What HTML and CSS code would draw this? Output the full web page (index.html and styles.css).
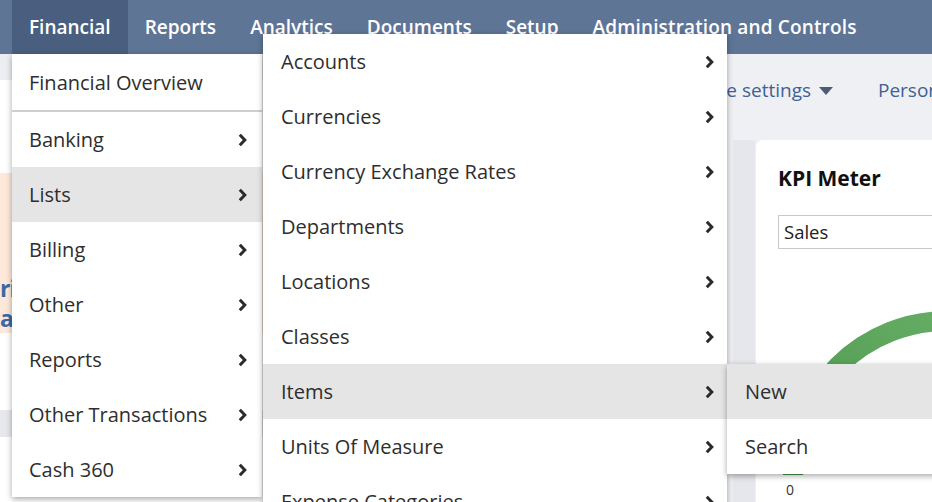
FILE: index.html
```html
<!DOCTYPE html>
<html lang="en">
<head>
<meta charset="utf-8">
<title>Financial menu</title>
<link rel="stylesheet" href="styles.css">
</head>
<body>
<div class="app">
  <nav class="topnav">
    <a class="tab active">Financial</a>
    <a class="tab">Reports</a>
    <a class="tab">Analytics</a>
    <a class="tab">Documents</a>
    <a class="tab">Setup</a>
    <a class="tab">Administration and Controls</a>
  </nav>

  <div class="page">
    <aside class="leftcol">
      <div class="lc-head"></div>
      <div class="lc-white"></div>
      <div class="lc-alert"><p>ri</p><p>a</p></div>
      <div class="lc-white2"></div>
      <div class="lc-band"></div>
    </aside>
    <main class="dash">
      <div class="dash-tools">
        <span class="link">Page settings</span>
        <svg class="caret" width="14" height="8" viewBox="0 0 14 8"><polygon points="0,0 14,0 7,8" fill="#4d5b74"/></svg>
        <span class="link persona">Personalize</span>
      </div>
      <div class="dash-body">
        <div class="gutter"></div>
        <section class="card">
          <h2 class="card-title">KPI Meter</h2>
          <div class="select">Sales</div>
          <svg class="gauge" width="340" height="260" viewBox="0 0 340 260">
            <defs>
              <linearGradient id="g1" x1="0" y1="1" x2="1" y2="0">
                <stop offset="0" stop-color="#4b944c"/>
                <stop offset="1" stop-color="#6db36c"/>
              </linearGradient>
            </defs>
            <path d="M 15 215 A 154 154 0 0 1 323 215" fill="none" stroke="url(#g1)" stroke-width="20"/>
            <text x="8" y="235" class="gauge-label">0</text>
          </svg>
        </section>
      </div>
    </main>
  </div>

  <div class="menu menu1">
    <div class="item overview">Financial Overview</div>
    <div class="item">Banking<svg class="chev" viewBox="0 0 9 14"><polyline points="1.8,1.8 6.8,7 1.8,12.2"/></svg></div>
    <div class="item hl">Lists<svg class="chev" viewBox="0 0 9 14"><polyline points="1.8,1.8 6.8,7 1.8,12.2"/></svg></div>
    <div class="item">Billing<svg class="chev" viewBox="0 0 9 14"><polyline points="1.8,1.8 6.8,7 1.8,12.2"/></svg></div>
    <div class="item">Other<svg class="chev" viewBox="0 0 9 14"><polyline points="1.8,1.8 6.8,7 1.8,12.2"/></svg></div>
    <div class="item">Reports<svg class="chev" viewBox="0 0 9 14"><polyline points="1.8,1.8 6.8,7 1.8,12.2"/></svg></div>
    <div class="item">Other Transactions<svg class="chev" viewBox="0 0 9 14"><polyline points="1.8,1.8 6.8,7 1.8,12.2"/></svg></div>
    <div class="item">Cash 360<svg class="chev" viewBox="0 0 9 14"><polyline points="1.8,1.8 6.8,7 1.8,12.2"/></svg></div>
  </div>

  <div class="menu menu2">
    <div class="item">Accounts<svg class="chev" viewBox="0 0 9 14"><polyline points="1.8,1.8 6.8,7 1.8,12.2"/></svg></div>
    <div class="item">Currencies<svg class="chev" viewBox="0 0 9 14"><polyline points="1.8,1.8 6.8,7 1.8,12.2"/></svg></div>
    <div class="item">Currency Exchange Rates<svg class="chev" viewBox="0 0 9 14"><polyline points="1.8,1.8 6.8,7 1.8,12.2"/></svg></div>
    <div class="item">Departments<svg class="chev" viewBox="0 0 9 14"><polyline points="1.8,1.8 6.8,7 1.8,12.2"/></svg></div>
    <div class="item">Locations<svg class="chev" viewBox="0 0 9 14"><polyline points="1.8,1.8 6.8,7 1.8,12.2"/></svg></div>
    <div class="item">Classes<svg class="chev" viewBox="0 0 9 14"><polyline points="1.8,1.8 6.8,7 1.8,12.2"/></svg></div>
    <div class="item hl">Items<svg class="chev" viewBox="0 0 9 14"><polyline points="1.8,1.8 6.8,7 1.8,12.2"/></svg></div>
    <div class="item">Units Of Measure<svg class="chev" viewBox="0 0 9 14"><polyline points="1.8,1.8 6.8,7 1.8,12.2"/></svg></div>
    <div class="item">Expense Categories<svg class="chev" viewBox="0 0 9 14"><polyline points="1.8,1.8 6.8,7 1.8,12.2"/></svg></div>
  </div>

  <div class="menu menu3">
    <div class="item hl">New</div>
    <div class="item">Search</div>
  </div>
</div>
</body>
</html>
```

FILE: styles.css
```css
* { box-sizing: border-box; }

html, body {
  margin: 0;
  padding: 0;
}

body {
  width: 932px;
  height: 502px;
  overflow: hidden;
  font-family: "Open Sans", "Noto Sans", sans-serif;
  background: #eff0f4;
}

.app {
  position: relative;
  width: 932px;
  height: 502px;
  overflow: hidden;
}

/* top navigation */
.topnav {
  display: flex;
  height: 54px;
  padding-left: 12px;
  background: #5f7596;
}

.tab {
  display: block;
  padding: 0 17px;
  line-height: 54px;
  font-size: 19px;
  font-weight: 600;
  color: #ffffff;
  white-space: nowrap;
}

.tab:last-child {
  letter-spacing: 0.15px;
}

.tab.active {
  background: #4a5f80;
}

/* background page */
.page {
  display: flex;
  height: 448px;
  overflow: hidden;
}

.leftcol {
  width: 600px;
  flex: none;
  display: flex;
  flex-direction: column;
  background: #ffffff;
}

.lc-head { height: 26px; flex: none; background: #eceef2; }
.lc-white { height: 93px; flex: none; }
.lc-alert {
  height: 160px;
  flex: none;
  background: #fde8da;
  padding-top: 100px;
}
.lc-alert p {
  margin: 0;
  font-size: 23px;
  line-height: 30px;
  font-weight: 700;
  letter-spacing: -1px;
  color: #3a6aa3;
}
.lc-white2 { height: 77px; flex: none; }
.lc-band { height: 27px; flex: none; background: #e6e8ed; }

.dash {
  flex: 1;
  display: flex;
  flex-direction: column;
  background: #eff0f4;
}

.dash-tools {
  height: 86px;
  flex: none;
  display: flex;
  align-items: center;
  padding-left: 94px;
  padding-bottom: 14px;
  white-space: nowrap;
}

.link {
  font-size: 19px;
  color: #3f6195;
}

.caret {
  margin-left: 8px;
  margin-top: 2px;
}

.persona {
  margin-left: 45px;
}

.dash-body {
  flex: 1;
  display: flex;
  padding-left: 133px;
}

.gutter {
  width: 22px;
  flex: none;
  background: #e5e7ec;
}

.card {
  margin-left: 1px;
  width: 240px;
  flex: none;
  background: #ffffff;
  border-radius: 7px 0 0 0;
  padding: 23px 0 0 22px;
}

.card-title {
  margin: 0;
  font-size: 21px;
  line-height: 30px;
  font-weight: 700;
  color: #111111;
}

.select {
  margin-top: 22px;
  height: 34px;
  border: 1px solid #c8c8c8;
  border-right: none;
  padding-left: 5px;
  font-size: 18.5px;
  line-height: 32px;
  color: #222222;
}

.gauge {
  display: block;
  margin-top: 11px;
}

.gauge-label {
  font-family: "Open Sans", sans-serif;
  font-size: 14px;
  fill: #333333;
}

/* dropdown menus (overlay) */
.menu {
  position: absolute;
  background: #ffffff;
  box-shadow: 0 2px 6px rgba(0, 0, 0, 0.35);
}

.menu1 {
  left: 12px;
  top: 54px;
  width: 250px;
  z-index: 2;
}

.menu2 {
  left: 263px;
  top: 34px;
  width: 464px;
  z-index: 3;
}

.menu3 {
  left: 727px;
  top: 364px;
  width: 230px;
  z-index: 4;
}

.item {
  display: flex;
  align-items: center;
  justify-content: space-between;
  height: 55px;
  font-size: 20px;
  font-weight: 500;
  color: #2e2e2e;
  white-space: nowrap;
}

.menu1 .item { padding: 0 15px 0 17px; }
.menu2 .item { padding: 0 13px 0 18px; }
.menu3 .item { padding: 0 18px 0 18px; }

.menu1 .overview {
  height: 58px;
  border-bottom: 2px solid #cfcfcf;
}

.item.hl {
  background: #e5e5e5;
}

.chev {
  width: 9px;
  height: 14px;
  flex: none;
}

.chev polyline {
  fill: none;
  stroke: #2a2a2a;
  stroke-width: 3;
  stroke-linecap: butt;
  stroke-linejoin: miter;
}
```
